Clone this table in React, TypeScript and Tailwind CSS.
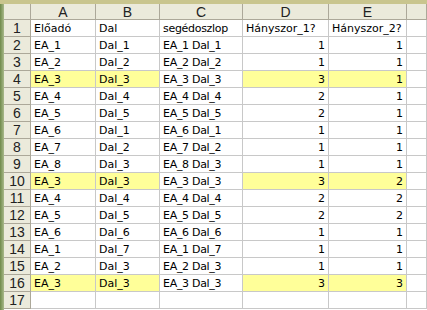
import React from "react";

type Row = [string, string, string, string, string, boolean];

const rows: Row[] = [
  ["Előadó", "Dal", "segédoszlop", "Hányszor_1?", "Hányszor_2?", false],
  ["EA_1", "Dal_1", "EA_1 Dal_1", "1", "1", false],
  ["EA_2", "Dal_2", "EA_2 Dal_2", "1", "1", false],
  ["EA_3", "Dal_3", "EA_3 Dal_3", "3", "1", true],
  ["EA_4", "Dal_4", "EA_4 Dal_4", "2", "1", false],
  ["EA_5", "Dal_5", "EA_5 Dal_5", "2", "1", false],
  ["EA_6", "Dal_1", "EA_6 Dal_1", "1", "1", false],
  ["EA_7", "Dal_2", "EA_7 Dal_2", "1", "1", false],
  ["EA_8", "Dal_3", "EA_8 Dal_3", "1", "1", false],
  ["EA_3", "Dal_3", "EA_3 Dal_3", "3", "2", true],
  ["EA_4", "Dal_4", "EA_4 Dal_4", "2", "2", false],
  ["EA_5", "Dal_5", "EA_5 Dal_5", "2", "2", false],
  ["EA_6", "Dal_6", "EA_6 Dal_6", "1", "1", false],
  ["EA_1", "Dal_7", "EA_1 Dal_7", "1", "1", false],
  ["EA_2", "Dal_3", "EA_2 Dal_3", "1", "1", false],
  ["EA_3", "Dal_3", "EA_3 Dal_3", "3", "3", true],
  ["", "", "", "", "", false],
];

const cols = "grid grid-cols-[27px_65px_64px_83px_86px_78px_1fr]";
const hdr =
  "h-[16px] flex items-center justify-center border-r border-b border-[#aca899] bg-[#ebeadb] text-[14px] leading-none text-[#222]";
const rowHdr =
  "h-[17px] flex items-center justify-center border-r border-b border-[#aca899] bg-[#ebeadb] text-[14px] leading-none text-[#222]";
const cell = "h-[17px] flex items-center border-r border-b border-[#c8c8c8] px-[3px] text-[11px] leading-none text-black whitespace-nowrap overflow-hidden";

export default function App() {
  return (
    <div className="w-[427px] h-[310px] overflow-hidden bg-white flex flex-col" style={{ fontFamily: '"DejaVu Sans", sans-serif' }}>
      <div className="h-[4px] shrink-0 bg-[#c9c58e]" />
      <div className="flex flex-1 min-h-0">
        <div className="w-[4px] shrink-0 bg-gradient-to-r from-[#6f8a4a] to-[#a9b98a]" />
        <div className="flex-1 min-w-0">
          <div className={cols} style={{ fontFamily: '"Liberation Sans", Arial, sans-serif' }}>
            <div className={hdr} />
            {["A", "B", "C", "D", "E", ""].map((c, i) => (
              <div key={i} className={hdr}>{c}</div>
            ))}
          </div>
          {rows.map((r, i) => (
            <div key={i} className={cols}>
              <div className={rowHdr} style={{ fontFamily: '"Liberation Sans", Arial, sans-serif' }}>{i + 1}</div>
              <div className={`${cell} ${r[5] ? "bg-[#ffff99]" : ""}`}>{r[0]}</div>
              <div className={`${cell} ${r[5] ? "bg-[#ffff99]" : ""}`}>{r[1]}</div>
              <div className={`${cell} tracking-[-0.3px]`}>{r[2]}</div>
              <div className={`${cell} ${i === 0 ? "" : "justify-end"} ${r[5] ? "bg-[#ffff99]" : ""}`}>{r[3]}</div>
              <div className={`${cell} ${i === 0 ? "" : "justify-end"} ${r[5] ? "bg-[#ffff99]" : ""}`}>{r[4]}</div>
              <div className={cell} />
            </div>
          ))}
        </div>
      </div>
    </div>
  );
}
